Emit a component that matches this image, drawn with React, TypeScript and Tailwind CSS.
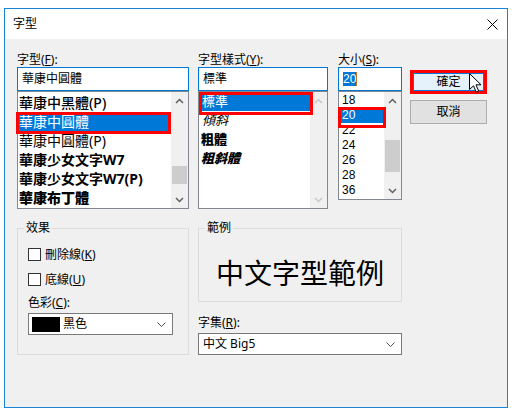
import React from 'react';

const Label = ({ children }: { children: React.ReactNode }) => (
  <div className="h-[15px] leading-[15px] text-[12px] whitespace-nowrap">{children}</div>
);

const Arrow = ({ up, light }: { up?: boolean; light?: boolean }) => (
  <svg width="9" height="6" viewBox="0 0 9 6" className={light ? 'text-[#c8c8c8]' : 'text-[#606060]'}>
    <path d={up ? 'M1 5 L4.5 1.5 L8 5' : 'M1 1 L4.5 4.5 L8 1'} fill="none" stroke="currentColor" strokeWidth="1.5" />
  </svg>
);

const ScrollBar = ({ thumb, light }: { thumb?: string; light?: boolean }) => (
  <div className="w-[17px] shrink-0 bg-[#f0f0f0] flex flex-col">
    <div className="h-[17px] flex items-center justify-center">
      <Arrow up light={light} />
    </div>
    <div className="flex-1">{thumb && <div className={`${thumb} mx-[1px] bg-[#cdcdcd]`} />}</div>
    <div className="h-[17px] flex items-center justify-center">
      <Arrow light={light} />
    </div>
  </div>
);

const ComboChevron = () => (
  <svg width="9" height="5" viewBox="0 0 9 5" className="text-[#505050]">
    <path d="M0.5 0.5 L4.5 4.5 L8.5 0.5" fill="none" stroke="currentColor" strokeWidth="1" />
  </svg>
);

const Checkbox = ({ children }: { children: React.ReactNode }) => (
  <div className="h-[13px] flex items-center gap-[4px]">
    <div className="w-[13px] h-[13px] border border-[#333333] bg-white" />
    <span className="text-[12px] leading-[13px] whitespace-nowrap">{children}</span>
  </div>
);

export default function App() {
  return (
    <div className="w-[514px] h-[415px] bg-white pt-[8px] pl-[4px] font-['Noto_Sans','Noto_Sans_CJK_TC',sans-serif] text-black">
      <div className="w-[504px] h-[400px] border border-[#1883d7] flex flex-col">
        {/* title bar */}
        <div className="h-[30px] bg-white flex items-center justify-between pl-[8px] pr-[9px]">
          <span className="text-[12px] leading-[16px]">字型</span>
          <svg width="11" height="11" viewBox="0 0 11 11">
            <path d="M0.5 0.5 L10.5 10.5 M10.5 0.5 L0.5 10.5" stroke="#000" strokeWidth="1" />
          </svg>
        </div>

        <div className="flex-1 bg-[#f0f0f0] pt-[13px] pl-[12px]">
          {/* top row */}
          <div className="flex">
            {/* font family */}
            <div className="w-[172px] flex flex-col">
              <Label>
                字型(<u>F</u>):
              </Label>
              <div className="h-[24px] border border-[#0078d7] bg-white pl-[4px] text-[12px] leading-[22px]">華康中圓體</div>
              <div className="h-[118px] border border-[#828790] bg-white flex">
                <div className="flex-1 flex flex-col text-[14px] leading-[19px] whitespace-nowrap">
                  <div className="h-[20px] pl-[1px] pt-[1px] font-medium">華康中黑體(P)</div>
                  <div className="relative h-[19px] pl-[1px] bg-[#0078d7] text-white">
                    華康中圓體
                    <span className="absolute left-[-2px] right-0 top-0 bottom-[-3px] border-[3px] border-[#ff0000]" />
                  </div>
                  <div className="h-[19px] pl-[1px]">華康中圓體(P)</div>
                  <div className="h-[19px] pl-[1px] font-bold">華康少女文字W7</div>
                  <div className="h-[19px] pl-[1px] font-bold">華康少女文字W7(P)</div>
                  <div className="h-[19px] pl-[1px] font-black">華康布丁體</div>
                </div>
                <ScrollBar thumb="mt-[57px] h-[18px]" />
              </div>
            </div>

            {/* style */}
            <div className="w-[130px] ml-[9px] flex flex-col">
              <Label>
                字型樣式(<u>Y</u>):
              </Label>
              <div className="h-[24px] border border-[#0078d7] bg-white pl-[4px] text-[12px] leading-[22px]">標準</div>
              <div className="h-[118px] border border-[#828790] bg-white flex">
                <div className="flex-1 flex flex-col text-[13px] leading-[19px] whitespace-nowrap">
                  <div className="relative h-[19px] pl-[3px] bg-[#0078d7] text-white">
                    標準
                    <span className="absolute left-0 right-[-3px] top-0 bottom-[-4px] border-[3px] border-[#ff0000]" />
                  </div>
                  <div className="h-[19px] pl-[3px] italic">傾斜</div>
                  <div className="h-[19px] pl-[2px] font-black">粗體</div>
                  <div className="h-[19px] pl-[2px] font-black italic">粗斜體</div>
                </div>
                <ScrollBar light />
              </div>
            </div>

            {/* size */}
            <div className="w-[64px] ml-[10px] flex flex-col font-['Liberation_Sans',sans-serif]">
              <div className="font-['Noto_Sans','Noto_Sans_CJK_TC',sans-serif]">
                <Label>
                  大小(<u>S</u>):
                </Label>
              </div>
              <div className="h-[24px] border border-[#0078d7] bg-white pl-[4px] text-[12px] leading-[22px] flex items-center">
                <span className="bg-[#0078d7] text-white leading-[14px]">20</span>
                <span className="w-[1px] h-[14px] bg-[#c07020]" />
              </div>
              <div className="h-[109px] border border-[#828790] bg-white flex">
                <div className="flex-1 flex flex-col pt-[1px] text-[12px] leading-[15px]">
                  <div className="h-[15px] pl-[3px]">18</div>
                  <div className="relative h-[15px] pl-[3px] bg-[#0078d7] text-white">
                    20
                    <span className="absolute left-[-1px] right-[-2px] top-[-1px] bottom-[-5px] border-[3px] border-[#ff0000]" />
                  </div>
                  <div className="h-[15px] pl-[3px]">22</div>
                  <div className="h-[15px] pl-[3px]">24</div>
                  <div className="h-[15px] pl-[3px]">26</div>
                  <div className="h-[15px] pl-[3px]">28</div>
                  <div className="h-[15px] pl-[3px]">36</div>
                </div>
                <ScrollBar thumb="mt-[31px] h-[32px]" />
              </div>
            </div>

            {/* buttons */}
            <div className="w-[77px] ml-[8px] pt-[18px] flex flex-col">
              <div className="relative h-[24px] border-[3px] border-[#ff0000]">
                <div className="h-full border border-[#0078d7] bg-[#e5f1fb] flex items-center justify-center text-[12px] leading-[14px]">
                  確定
                </div>
                <svg className="absolute left-[56px] top-[0px]" width="13" height="20" viewBox="0 0 13 20">
                  <path
                    d="M0.5 0.5 L0.5 16.5 L4.5 12.8 L7.2 19 L9.6 18 L7 11.8 L12 11.8 Z"
                    fill="#fff"
                    stroke="#000"
                    strokeWidth="1"
                    strokeLinejoin="miter"
                  />
                </svg>
              </div>
              <div className="mt-[6px] h-[24px] border border-[#adadad] bg-[#e1e1e1] flex items-center justify-center text-[12px] leading-[14px]">
                取消
              </div>
            </div>
          </div>

          {/* bottom row */}
          <div className="flex mt-[19px]">
            {/* effects */}
            <div className="w-[172px] border border-[#dcdcdc] flex flex-col pl-[10px] pb-[19px]">
              <span className="-mt-[9px] -ml-[4px] self-start px-[2px] bg-[#f0f0f0] h-[16px] leading-[16px] text-[12px]">效果</span>
              <div className="mt-[12px]">
                <Checkbox>
                  刪除線(<u>K</u>)
                </Checkbox>
              </div>
              <div className="mt-[12px]">
                <Checkbox>
                  底線(<u>U</u>)
                </Checkbox>
              </div>
              <div className="mt-[9px] h-[16px] leading-[16px] text-[12px]">
                色彩(<u>C</u>):
              </div>
              <div className="mt-[2px] w-[145px] h-[22px] border border-[#7a7a7a] bg-white flex items-center pl-[3px] pr-[6px]">
                <div className="w-[28px] h-[15px] bg-black" />
                <span className="ml-[3px] text-[12px] leading-[14px]">黑色</span>
                <div className="ml-auto flex">
                  <ComboChevron />
                </div>
              </div>
            </div>

            {/* sample + charset */}
            <div className="w-[204px] ml-[9px] flex flex-col">
              <div className="border border-[#dcdcdc] flex flex-col pb-[14px]">
                <span className="-mt-[9px] ml-[6px] self-start px-[2px] bg-[#f0f0f0] h-[16px] leading-[16px] text-[12px]">範例</span>
                <div className="mt-[23px] h-[28px] leading-[28px] text-[28px] text-center">中文字型範例</div>
              </div>
              <div className="mt-[13px] h-[16px] leading-[16px] text-[12px]">
                字集(<u>R</u>):
              </div>
              <div className="mt-[2px] h-[22px] border border-[#7a7a7a] bg-white flex items-center pl-[4px] pr-[6px]">
                <span className="text-[12px] leading-[14px]">中文 Big5</span>
                <div className="ml-auto flex">
                  <ComboChevron />
                </div>
              </div>
            </div>
          </div>
        </div>
      </div>
    </div>
  );
}
